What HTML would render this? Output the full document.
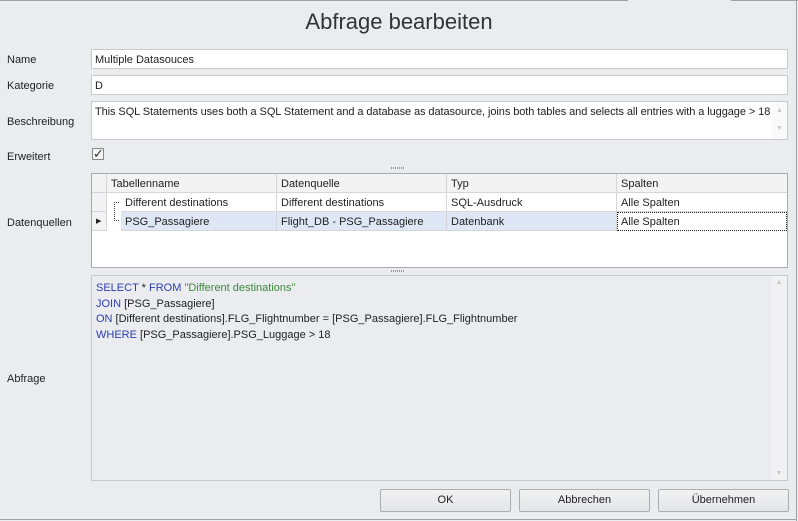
<!DOCTYPE html>
<html><head><style>
body{margin:0;width:798px;height:521px;background:#ebecf0;font-family:"Liberation Sans",sans-serif;font-size:11px;color:#222;position:relative;overflow:hidden}
.a{position:absolute}
.lbl{position:absolute;left:7px}
.box{position:absolute;left:91px;width:697px;background:#fff;border:1px solid #c9cacd;box-sizing:border-box;padding:4px 3px 2px}
.btn{position:absolute;top:489px;width:131px;height:23px;box-sizing:border-box;border:1px solid #acadb1;border-radius:2px;background:linear-gradient(#f2f2f3,#e4e5e8);text-align:center;line-height:21px}
.cell{position:absolute;height:19px;line-height:20px;padding-left:4px;box-sizing:border-box;border-right:1px solid #d5d6d9;border-bottom:1px solid #d5d6d9;white-space:nowrap}
.grip{position:absolute;left:391px;width:14px;height:2px;background:repeating-linear-gradient(90deg,#999 0 1px,transparent 1px 2px)}
</style></head><body>
<div class="a" style="left:0;top:0;width:628px;height:1px;background:#9fa0a4"></div>
<div class="a" style="left:731px;top:0;width:67px;height:1px;background:#9fa0a4"></div>
<div class="a" style="left:796px;top:0;width:1px;height:521px;background:#a0a1a5"></div>
<div class="a" style="left:0;top:519px;width:797px;height:1px;background:#a0a1a5"></div>
<div class="a" style="left:0;top:9px;width:798px;text-align:center;font-size:22px;color:#333">Abfrage bearbeiten</div>

<div class="lbl" style="top:54px">Name</div>
<div class="box" style="top:49px;height:20px">Multiple Datasouces</div>
<div class="lbl" style="top:80px">Kategorie</div>
<div class="box" style="top:75px;height:20px">D</div>
<div class="lbl" style="top:116px">Beschreibung</div>
<div class="box" style="top:101px;height:39px;white-space:nowrap;letter-spacing:-0.08px;overflow:hidden">This SQL Statements uses both a SQL Statement and a database as datasource, joins both tables and selects all entries with a luggage &gt; 18</div>
<div class="a" style="left:772px;top:102px;width:15px;height:37px;background:#fafafa;color:#c8c8c8;font-size:7px;text-align:center;line-height:18px">▲<br>▼</div>
<div class="lbl" style="top:151px">Erweitert</div>
<div class="a" style="left:92px;top:148px;width:12px;height:12px;border:1px solid #888;background:#f4f4f4;box-sizing:border-box;font-size:13px;line-height:9px;color:#333">✓</div>
<div class="grip" style="top:167px"></div>

<div class="lbl" style="top:217px">Datenquellen</div>
<div class="a" style="left:91px;top:173px;width:697px;height:95px;background:#fff;border:1px solid #a9aaad;box-sizing:border-box"></div>
<div class="a" style="left:92px;top:174px;width:695px;height:19px;background:#f3f3f4"></div>
<div class="cell" style="left:92px;top:174px;width:15px"></div>
<div class="cell" style="left:107px;top:174px;width:170px">Tabellenname</div>
<div class="cell" style="left:277px;top:174px;width:170px">Datenquelle</div>
<div class="cell" style="left:447px;top:174px;width:170px">Typ</div>
<div class="cell" style="left:617px;top:174px;width:170px;border-right:none">Spalten</div>
<div class="cell" style="left:92px;top:193px;width:15px;background:#f3f3f4"></div>
<div class="cell" style="left:92px;top:212px;width:15px;background:#f3f3f4;font-size:7px;padding-left:4px">▶</div>
<div class="a" style="left:114px;top:202px;width:5px;height:19px;border-left:1px dotted #444;border-top:1px dotted #444;border-bottom:1px dotted #444;box-sizing:border-box"></div>
<div class="cell" style="left:121px;top:193px;width:156px">Different destinations</div>
<div class="cell" style="left:277px;top:193px;width:170px">Different destinations</div>
<div class="cell" style="left:447px;top:193px;width:170px">SQL-Ausdruck</div>
<div class="cell" style="left:617px;top:193px;width:170px;border-right:none">Alle Spalten</div>
<div class="cell" style="left:121px;top:212px;width:156px;background:#dfe7f7">PSG_Passagiere</div>
<div class="cell" style="left:277px;top:212px;width:170px;background:#dfe7f7">Flight_DB - PSG_Passagiere</div>
<div class="cell" style="left:447px;top:212px;width:170px;background:#dfe7f7">Datenbank</div>
<div class="cell" style="left:617px;top:212px;width:170px;border:1px dotted #222;line-height:18px;padding-left:3px">Alle Spalten</div>
<div class="grip" style="top:270px"></div>

<div class="lbl" style="top:373px">Abfrage</div>
<div class="a" style="left:91px;top:275px;width:697px;height:206px;border:1px solid #c9cacd;box-sizing:border-box;background:#ebecf0"></div>
<div class="a" style="left:771px;top:276px;width:16px;height:204px;background:#f1f1f3;color:#c8c8c8;font-size:7px;text-align:center"><div style="margin-top:3px">▲</div><div style="position:absolute;bottom:3px;width:16px">▼</div></div>
<div class="a" style="left:96px;top:281px;line-height:15.5px;color:#222">
<span style="color:#2a3fb0">SELECT</span> * <span style="color:#2a3fb0">FROM</span> <span style="color:#3a8a3a">"Different destinations"</span><br>
<span style="color:#2a3fb0">JOIN</span> [PSG_Passagiere]<br>
<span style="color:#2a3fb0">ON</span> [Different destinations].FLG_Flightnumber = [PSG_Passagiere].FLG_Flightnumber<br>
<span style="color:#2a3fb0">WHERE</span> [PSG_Passagiere].PSG_Luggage &gt; 18</div>

<div class="btn" style="left:380px">OK</div>
<div class="btn" style="left:519px">Abbrechen</div>
<div class="btn" style="left:658px">Übernehmen</div>
</body></html>
